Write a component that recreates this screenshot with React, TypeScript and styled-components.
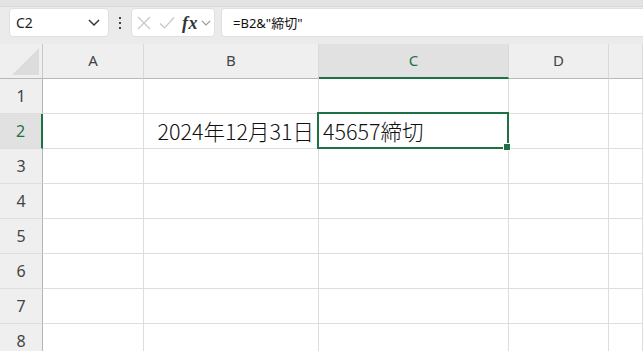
import React from "react"
import styled, { createGlobalStyle, css } from "styled-components"

const GREEN = "#1e7145"

const GlobalStyle = createGlobalStyle`
  html, body {
    margin: 0;
    padding: 0;
    background: #ffffff;
    overflow: hidden;
  }
  body {
    font-family: "Noto Sans", "Liberation Sans", sans-serif;
  }
`

const COLUMNS = ["A", "B", "C", "D", ""]
const ROWS = [1, 2, 3, 4, 5, 6, 7, 8]

const cellValue = (row: number, col: string) => {
  if (row === 2 && col === "B") return { text: "2024年12月31日", align: "right" as const }
  if (row === 2 && col === "C") return { text: "45657締切", align: "left" as const }
  return null
}

export default function App() {
  return (
    <Page>
      <GlobalStyle />
      <Toolbar>
        <NameBox>
          <span>C2</span>
          <Chevron size={12} color="#333" />
        </NameBox>
        <Dots>
          <svg width="4" height="14" viewBox="0 0 4 14">
            <rect x="1" y="1" width="2" height="2" fill="#444" />
            <rect x="1" y="6" width="2" height="2" fill="#444" />
            <rect x="1" y="11" width="2" height="2" fill="#444" />
          </svg>
        </Dots>
        <FxBox>
          <svg width="14" height="14" viewBox="0 0 14 14">
            <path d="M1 1 L13 13 M13 1 L1 13" stroke="#c6c6c6" strokeWidth="1.2" fill="none" />
          </svg>
          <svg width="16" height="14" viewBox="0 0 16 14">
            <path d="M1 7.5 L5.5 12 L15 1.5" stroke="#c6c6c6" strokeWidth="1.2" fill="none" />
          </svg>
          <FxLabel>
            <Fx>fx</Fx>
            <Chevron size={10} color="#999" />
          </FxLabel>
        </FxBox>
        <FormulaBox>=B2&amp;"締切"</FormulaBox>
      </Toolbar>

      <Sheet>
        <Corner>
          <svg width="27" height="27" viewBox="0 0 27 27">
            <polygon points="27,0 27,27 0,27" fill="#dcdcdc" />
          </svg>
        </Corner>
        {COLUMNS.map((c) => (
          <ColHeader key={c || "E"} $active={c === "C"}>
            {c}
          </ColHeader>
        ))}
        {ROWS.map((r) => (
          <React.Fragment key={r}>
            <RowHeader $active={r === 2}>{r}</RowHeader>
            {COLUMNS.map((c) => {
              const v = cellValue(r, c)
              const selected = r === 2 && c === "C"
              return (
                <Cell key={c || "E"} $align={v?.align ?? "left"} $selected={selected}>
                  {v?.text}
                  {selected && <FillHandle />}
                </Cell>
              )
            })}
          </React.Fragment>
        ))}
      </Sheet>
    </Page>
  )
}

const Chevron = ({ size, color }: { size: number; color: string }) => (
  <svg width={size} height={size * 0.6} viewBox="0 0 10 6">
    <path d="M0.8 0.8 L5 5 L9.2 0.8" stroke={color} strokeWidth="1.2" fill="none" />
  </svg>
)

const Page = styled.div`
  width: 643px;
  height: 351px;
  overflow: hidden;
`

const Toolbar = styled.div`
  display: flex;
  align-items: flex-start;
  height: 44px;
  box-sizing: border-box;
  padding: 8px 0 0 9px;
  background: linear-gradient(#e3e3e3 0, #e3e3e3 6px, #d9d9d9 6px, #d9d9d9 7px, #ebebeb 7px);
`

const boxBase = css`
  height: 29px;
  box-sizing: border-box;
  background: #ffffff;
  border: 1px solid #e0e0e0;
  border-radius: 4px;
  display: flex;
  align-items: center;
`

const NameBox = styled.div`
  ${boxBase};
  width: 100px;
  justify-content: space-between;
  padding: 0 8px 0 6px;
  font-size: 14px;
  color: #222;
`

const Dots = styled.div`
  width: 22px;
  height: 29px;
  display: flex;
  align-items: center;
  justify-content: center;
`

const FxBox = styled.div`
  ${boxBase};
  width: 84px;
  padding: 0 3px 0 5px;
  justify-content: space-between;
`

const FxLabel = styled.div`
  display: flex;
  align-items: center;
  gap: 3px;
`

const Fx = styled.span`
  font-family: "Liberation Serif", serif;
  font-style: italic;
  font-weight: bold;
  font-size: 18px;
  color: #333;
  letter-spacing: 0.5px;
  line-height: 1;
`

const FormulaBox = styled.div`
  ${boxBase};
  flex: 1;
  margin-left: 6px;
  border-right: none;
  border-radius: 4px 0 0 4px;
  padding-left: 11px;
  font-family: "Noto Sans", "Noto Sans CJK JP", sans-serif;
  font-size: 13px;
  color: #111;
`

const Sheet = styled.div`
  display: grid;
  grid-template-columns: 43px 101px 175px 190px 100px 1fr;
  grid-template-rows: 35px repeat(8, 35px);
`

const Corner = styled.div`
  background: #efefef;
  border-right: 1px solid #c8c8c8;
  border-bottom: 1px solid #b8b8b8;
  display: flex;
  align-items: flex-end;
  justify-content: flex-end;
  padding: 0 3px 3px 0;
`

const ColHeader = styled.div<{ $active: boolean }>`
  display: flex;
  align-items: center;
  justify-content: center;
  background: ${(p) => (p.$active ? "#e1e1e1" : "#efefef")};
  border-right: 1px solid #d9d9d9;
  border-bottom: ${(p) => (p.$active ? `2px solid ${GREEN}` : "1px solid #b8b8b8")};
  font-size: 15px;
  color: ${(p) => (p.$active ? GREEN : "#444")};
  padding-bottom: 2px;
`

const RowHeader = styled.div<{ $active: boolean }>`
  display: flex;
  align-items: center;
  justify-content: center;
  background: ${(p) => (p.$active ? "#e1e1e1" : "#efefef")};
  border-right: ${(p) => (p.$active ? `2px solid ${GREEN}` : "1px solid #b4b4b4")};
  border-bottom: 1px solid #dedede;
  font-size: 16px;
  color: ${(p) => (p.$active ? GREEN : "#444")};
`

const Cell = styled.div<{ $align: "left" | "right"; $selected: boolean }>`
  position: relative;
  display: flex;
  align-items: center;
  justify-content: ${(p) => (p.$align === "right" ? "flex-end" : "flex-start")};
  padding: 0 4px 1px;
  border-right: 1px solid #dedede;
  border-bottom: 1px solid #dedede;
  font-family: "Noto Sans CJK JP", sans-serif;
  font-size: 21.5px;
  font-weight: 300;
  color: #111;
  white-space: nowrap;
  ${(p) =>
    p.$selected &&
    css`
      &::after {
        content: "";
        position: absolute;
        top: -2px;
        left: -2px;
        right: -1px;
        bottom: -1px;
        border: 2px solid ${GREEN};
        pointer-events: none;
      }
    `}
`

const FillHandle = styled.span`
  position: absolute;
  right: -3px;
  bottom: -3px;
  width: 6px;
  height: 6px;
  background: ${GREEN};
  border: 1px solid #ffffff;
  z-index: 1;
`
